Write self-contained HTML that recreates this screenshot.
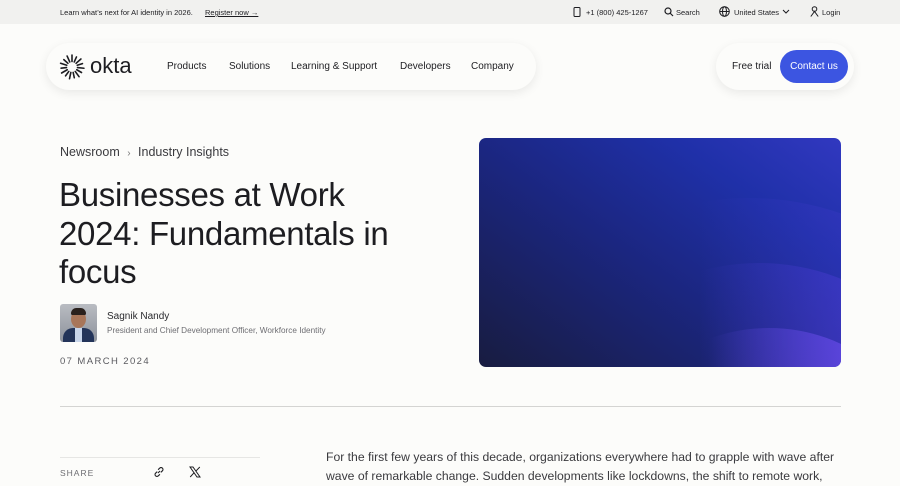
<!DOCTYPE html>
<html><head><meta charset="utf-8"><style>
*{margin:0;padding:0;box-sizing:border-box}
body{width:900px;height:484px;overflow:hidden;background:#fcfcfa;font-family:"Liberation Sans",sans-serif;color:#1d1d21;position:relative}
.top{position:absolute;left:0;top:0;width:900px;height:24px;background:#f1f1ef;font-size:7.5px;color:#1d1d21}
.top span{position:absolute;top:8px;white-space:nowrap}
.nav{position:absolute;left:46px;top:43px;width:490px;height:47px;background:#fcfcfa;border-radius:24px;box-shadow:0 3px 10px rgba(0,0,0,.08)}
.nav a{position:absolute;top:18px;font-size:10px;color:#1d1d21;white-space:nowrap}
.nav2{position:absolute;left:716px;top:43px;width:138px;height:47px;background:#fcfcfa;border-radius:24px;box-shadow:0 3px 10px rgba(0,0,0,.08)}
.btn{position:absolute;left:780px;top:50px;width:68px;height:33px;border-radius:17px;background:#3c55e1;color:#fff;font-size:10px;text-align:center;line-height:33px}
.crumb{position:absolute;left:60px;top:145px;font-size:12.5px;color:#3a3a3e}
h1{position:absolute;left:59px;top:176px;width:345px;font-weight:normal;font-size:33px;line-height:38.5px;letter-spacing:-.3px;color:#1d1d21}
.img{position:absolute;left:479px;top:138px;width:362px;height:229px;border-radius:7px;overflow:hidden;background:linear-gradient(35deg,#181c40 0%,#1b2680 45%,#1f30a8 75%,#3138c0 100%)}
.img i{position:absolute;border-radius:50%}
.p{position:absolute;left:326px;top:448px;font-size:12.2px;line-height:19px;color:#3a3a3e;white-space:nowrap}
</style></head><body>
<div class="top">
<span style="left:60px">Learn what’s next for AI identity in 2026.</span>
<span style="left:205px;text-decoration:underline">Register now →</span>
<svg style="position:absolute;left:573px;top:7px" width="8" height="10" viewBox="0 0 8 10"><rect x="1" y=".5" width="6" height="9" rx="1" fill="none" stroke="#1d1d21"/></svg>
<span style="left:586px">+1 (800) 425-1267</span>
<svg style="position:absolute;left:664px;top:7px" width="10" height="10" viewBox="0 0 10 10"><circle cx="4" cy="4" r="3" fill="none" stroke="#1d1d21" stroke-width="1.2"/><path d="M6 6l3 3" stroke="#1d1d21" stroke-width="1.2"/></svg>
<span style="left:676px">Search</span>
<svg style="position:absolute;left:719px;top:6px" width="11" height="11" viewBox="0 0 11 11" fill="none" stroke="#1d1d21"><circle cx="5.5" cy="5.5" r="4.8"/><ellipse cx="5.5" cy="5.5" rx="2" ry="4.8"/><path d="M.7 5.5h9.6"/></svg>
<span style="left:734px">United States</span>
<svg style="position:absolute;left:782px;top:9px" width="8" height="6"><path d="M1 1l3 3 3-3" fill="none" stroke="#1d1d21"/></svg>
<svg style="position:absolute;left:810px;top:6px" width="9" height="11" viewBox="0 0 9 11" fill="none" stroke="#1d1d21"><circle cx="4.5" cy="3" r="2.3"/><path d="M.8 10.5l3.7-5 3.7 5"/></svg>
<span style="left:822px">Login</span>
</div>
<div class="nav">
<svg style="position:absolute;left:13px;top:11px" width="26" height="26" viewBox="-13 -13 26 26">
<g stroke="#1d1d21" stroke-width="1.6" stroke-linecap="round">
<line x1="0" y1="-5.5" x2="0" y2="-12" transform="rotate(0)"/><line x1="0" y1="-5.5" x2="0" y2="-11" transform="rotate(24)"/><line x1="0" y1="-5.5" x2="0" y2="-12" transform="rotate(48)"/><line x1="0" y1="-5.5" x2="0" y2="-11" transform="rotate(72)"/><line x1="0" y1="-5.5" x2="0" y2="-12" transform="rotate(96)"/><line x1="0" y1="-5.5" x2="0" y2="-11" transform="rotate(120)"/><line x1="0" y1="-5.5" x2="0" y2="-12" transform="rotate(144)"/><line x1="0" y1="-5.5" x2="0" y2="-11" transform="rotate(168)"/><line x1="0" y1="-5.5" x2="0" y2="-12" transform="rotate(192)"/><line x1="0" y1="-5.5" x2="0" y2="-11" transform="rotate(216)"/><line x1="0" y1="-5.5" x2="0" y2="-12" transform="rotate(240)"/><line x1="0" y1="-5.5" x2="0" y2="-11" transform="rotate(264)"/><line x1="0" y1="-5.5" x2="0" y2="-12" transform="rotate(288)"/><line x1="0" y1="-5.5" x2="0" y2="-11" transform="rotate(312)"/><line x1="0" y1="-5.5" x2="0" y2="-12" transform="rotate(336)"/>
</g></svg>
<span style="position:absolute;left:44px;top:10px;font-size:22px;letter-spacing:0px;color:#1d1d21">okta</span>
<a style="left:121px">Products</a><a style="left:183px">Solutions</a><a style="left:245px">Learning &amp; Support</a><a style="left:354px">Developers</a><a style="left:425px">Company</a>
</div>
<div class="nav2"><span style="position:absolute;left:16px;top:18px;font-size:10px">Free trial</span></div>
<div class="btn">Contact us</div>
<div class="crumb">Newsroom <span style="font-size:10px;color:#777;margin:0 4px">›</span> Industry Insights</div>
<h1>Businesses at Work 2024: Fundamentals in focus</h1>
<div style="position:absolute;left:60px;top:304px;width:37px;height:38px;border-radius:3px;background:linear-gradient(#b9bcc2,#8d929b);overflow:hidden">
<div style="position:absolute;left:11px;top:6px;width:15px;height:18px;border-radius:50%;background:#a8765a"></div>
<div style="position:absolute;left:11px;top:4px;width:15px;height:7px;border-radius:7px 7px 2px 2px;background:#2a211d"></div>
<div style="position:absolute;left:3px;top:24px;width:31px;height:20px;border-radius:10px 10px 0 0;background:#233459"></div>
<div style="position:absolute;left:15px;top:24px;width:7px;height:14px;background:#c9d6ea"></div>
</div>
<div style="position:absolute;left:107px;top:311px;font-size:10px;color:#2a2a2e">Sagnik Nandy</div>
<div style="position:absolute;left:107px;top:326px;font-size:8.2px;color:#6e6e73">President and Chief Development Officer, Workforce Identity</div>
<div style="position:absolute;left:60px;top:356px;font-size:9.5px;letter-spacing:1.4px;color:#5a5a5f">07 MARCH 2024</div>
<div class="img">
<i style="left:20px;top:60px;width:500px;height:440px;background:linear-gradient(90deg,rgba(40,50,190,0) 40%,rgba(75,60,215,.45) 100%)"></i>
<i style="left:80px;top:125px;width:400px;height:360px;background:linear-gradient(90deg,rgba(40,50,190,0) 35%,rgba(90,65,230,.6) 100%)"></i>
<i style="left:140px;top:190px;width:300px;height:260px;background:linear-gradient(90deg,rgba(40,50,190,0) 30%,rgba(115,80,245,.9) 100%)"></i>
</div>
<div style="position:absolute;left:60px;top:406px;width:781px;height:1px;background:#d4d4d2"></div>
<div style="position:absolute;left:60px;top:457px;width:200px;height:1px;background:#e6e6e4"></div>
<div style="position:absolute;left:60px;top:468px;font-size:8.5px;letter-spacing:1px;color:#6e6e73">SHARE</div>
<svg style="position:absolute;left:153px;top:466px" width="12" height="12" viewBox="0 0 12 12" fill="none" stroke="#1d1d21" stroke-width="1.1"><path d="M5 7l2-2M4.2 5.6L2.6 7.2a1.9 1.9 0 002.7 2.7L6.9 8.3M7.8 6.4l1.6-1.6a1.9 1.9 0 00-2.7-2.7L5.1 3.7"/></svg>
<svg style="position:absolute;left:189px;top:466px" width="12" height="12" viewBox="0 0 12 12"><path d="M1 1h3l7 10H8z" fill="none" stroke="#1d1d21" stroke-width="1"/><path d="M1.2 11L5.3 6.4M6.8 5.2L10.8 1" stroke="#1d1d21" stroke-width="1"/></svg>
<div class="p">For the first few years of this decade, organizations everywhere had to grapple with wave after<br>wave of remarkable change. Sudden developments like lockdowns, the shift to remote work,</div>
</body></html>
